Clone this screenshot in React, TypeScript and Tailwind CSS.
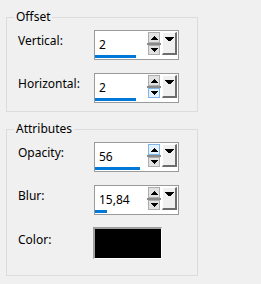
import React from 'react';

type SpinProps = {
  value: string;
  bar: number;
  hot?: 'up' | 'down';
};

function UpArrow() {
  return (
    <svg width="7" height="4" viewBox="0 0 7 4" className="block" shapeRendering="crispEdges">
      <path d="M3 0h1v1h1v1h1v1h1v1H0V3h1V2h1V1h1z" fill="#000" />
    </svg>
  );
}

function DownArrow({ w = 7 }: { w?: number }) {
  // stepped triangle so it stays crisp at 1x
  const d =
    w === 9
      ? 'M0 0h9v1H8v1H7v1H6v1H3V3H2V2H1V1H0z'
      : 'M0 0h7v1H6v1H5v1H4v1H3V3H2V2H1V1H0z';
  return (
    <svg width={w} height="4" viewBox={`0 0 ${w} 4`} className="block" shapeRendering="crispEdges">
      <path d={d} fill="#000" />
    </svg>
  );
}

function SpinField({ value, bar, hot }: SpinProps) {
  const btn = (on: boolean) =>
    on
      ? 'border border-[#7eb4ea] bg-[#e5f1fb]'
      : 'border border-[#adadad] bg-[#e1e1e1]';

  return (
    <div className="flex h-[30px] w-[85px] items-start border border-[#9a9a9a] bg-white">
      <div className="flex w-[52px] flex-col">
        <span className="mt-[6px] h-[16px] pl-[4px] text-[12px] leading-[16px] text-black">{value}</span>
        <div className="mt-[2px] h-[3px] bg-[#0078d7]" style={{ width: bar }} />
      </div>
      <div className="mt-[1px] flex w-[14px] flex-col">
        <div className={`mx-[1px] flex h-[11px] items-center justify-center ${btn(hot === 'up')}`}>
          <UpArrow />
        </div>
        <div className="h-[2px] bg-[#8a8a8a]" />
        <div className={`mx-[1px] flex h-[10px] items-center justify-center ${btn(hot === 'down')}`}>
          <DownArrow />
        </div>
      </div>
      <div className="ml-[1px] mt-[1px] flex h-[23px] w-[15px] justify-center border-t border-l border-r-2 border-b-2 border-t-white border-l-white border-r-[#6d6d6d] border-b-[#6d6d6d] bg-[#f0f0f0] pt-[4px]">
        <DownArrow w={9} />
      </div>
    </div>
  );
}

function Row({ label, children, top = 'mt-[3px]' }: { label: string; children: React.ReactNode; top?: string }) {
  return (
    <div className="flex items-start">
      <span className={`w-[76px] text-[12px] leading-[16px] text-black ${top}`}>{label}</span>
      {children}
    </div>
  );
}

export default function App() {
  return (
    <div
      className="h-[284px] w-[261px] overflow-hidden bg-[#f0f0f0] pt-[9px]"
      style={{ fontFamily: '"Noto Sans", "Open Sans", sans-serif' }}
    >
      <fieldset className="ml-[6px] w-[192px] border border-[#dcdcdc]">
        <legend className="ml-[7px] px-[2px] text-[12px] leading-[16px] text-black">Offset</legend>
        <div className="flex flex-col gap-[13px] pb-[8px] pl-[11px] pt-[5px]">
          <Row label="Vertical:">
            <SpinField value="2" bar={41} />
          </Row>
          <Row label="Horizontal:">
            <SpinField value="2" bar={41} hot="down" />
          </Row>
        </div>
      </fieldset>

      <fieldset className="ml-[6px] mt-[9px] w-[192px] border border-[#dcdcdc]">
        <legend className="ml-[7px] px-[2px] text-[12px] leading-[16px] text-black">Attributes</legend>
        <div className="flex flex-col pb-[16px] pl-[11px] pt-[5px]">
          <Row label="Opacity:">
            <SpinField value="56" bar={45} hot="up" />
          </Row>
          <div className="mt-[13px]">
            <Row label="Blur:">
              <SpinField value="15,84" bar={12} />
            </Row>
          </div>
          <div className="mt-[12px] flex items-start">
            <span className="mt-[5px] w-[75px] text-[12px] leading-[16px] text-black">Color:</span>
            <div className="h-[32px] w-[69px] border-t-2 border-l-2 border-r border-b border-t-[#a0a0a0] border-l-[#a0a0a0] border-r-white border-b-white bg-black" />
          </div>
        </div>
      </fieldset>
    </div>
  );
}
